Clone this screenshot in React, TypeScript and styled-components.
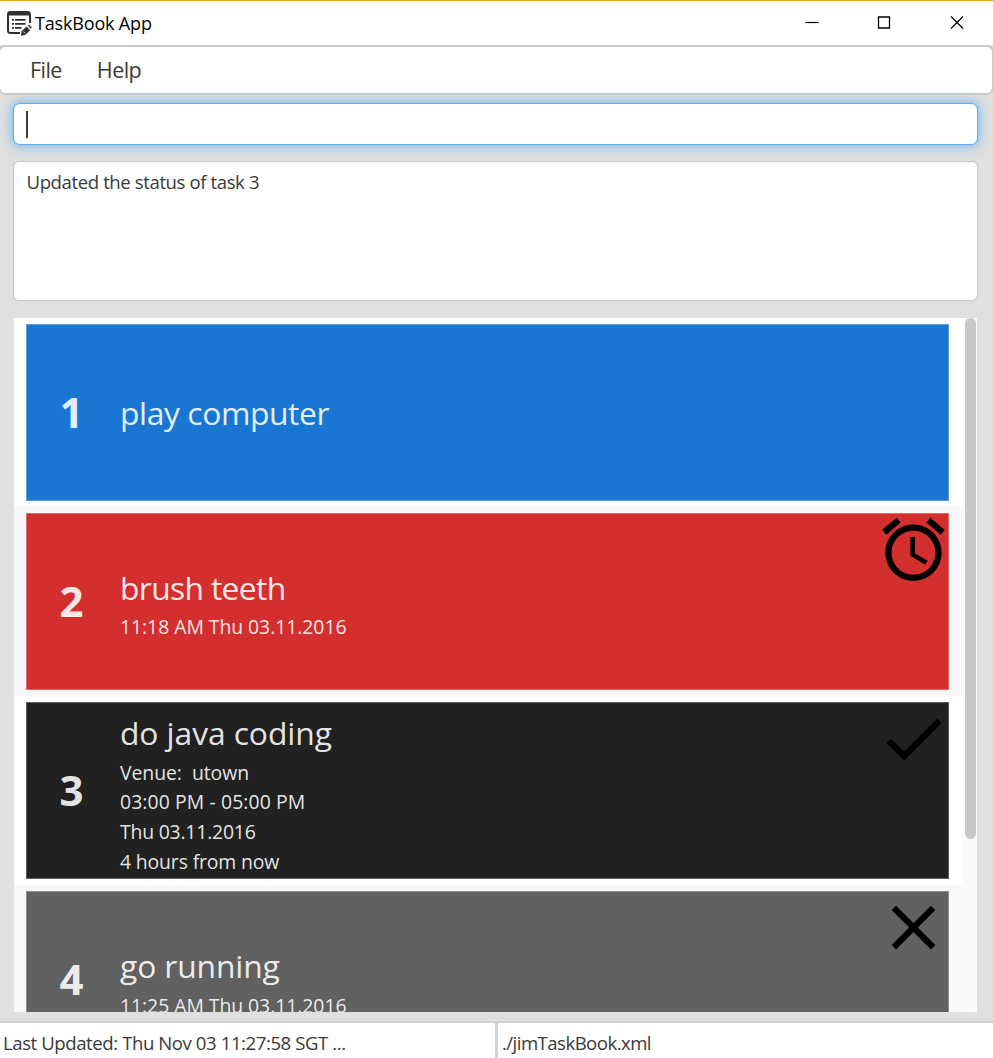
import React from "react";
import styled, { createGlobalStyle } from "styled-components";

const GlobalStyle = createGlobalStyle`
  * { box-sizing: border-box; }
  body {
    margin: 0;
    font-family: "Open Sans", "Noto Sans", sans-serif;
    color: #3a3a3a;
    background: #e0e0e0;
  }
`;

const Window = styled.div`
  display: flex;
  flex-direction: column;
  width: 994px;
  height: 1058px;
  overflow: hidden;
  background: #e0e0e0;
  border-top: 1px solid #f3a42f;
  border-right: 1px solid #d9d8cf;
`;

const TitleBar = styled.header`
  display: flex;
  align-items: center;
  flex: none;
  height: 44px;
  padding-left: 6px;
  background: #fff;
`;

const AppTitle = styled.h1`
  flex: 1;
  margin: 0 0 0 3px;
  font-size: 18px;
  font-weight: 400;
  line-height: 44px;
  letter-spacing: -0.17px;
  color: #000;
`;

const WindowButtons = styled.div`
  display: flex;
`;

const WindowButton = styled.div`
  display: flex;
  align-items: center;
  justify-content: center;
  width: 72.5px;
  height: 44px;
`;

const MenuBar = styled.nav`
  display: flex;
  align-items: center;
  flex: none;
  gap: 35px;
  height: 50px;
  margin: 0 -1px 0 -2px;
  padding-left: 30px;
  background: #fff;
  border: 2px solid #cbcbcb;
  border-radius: 7px;
`;

const MenuItem = styled.span`
  font-size: 21.5px;
  line-height: 46px;
  letter-spacing: -0.55px;
`;

const Body = styled.main`
  display: flex;
  flex-direction: column;
  flex: 1;
  min-height: 0;
  padding: 8px 15px 9px 13px;
`;

const CommandBox = styled.div`
  display: flex;
  align-items: center;
  flex: none;
  height: 42px;
  padding-left: 12px;
  background: #fff;
  border: 1.5px solid #62b0ea;
  border-radius: 7px;
  box-shadow: 0 0 0 1px rgba(150, 203, 243, 0.75), 0 0 12px 1px rgba(80, 166, 232, 0.72);
`;

const Caret = styled.span`
  width: 1.5px;
  height: 27px;
  background: #3c3c3c;
`;

const ResultDisplay = styled.div`
  flex: none;
  height: 140px;
  margin-top: 16px;
  padding: 6px 12.5px;
  background: #fff;
  border: 1px solid #c8c8c8;
  border-radius: 6px;
  box-shadow: 0 0 1px #c8c8c8;
  font-size: 18.6px;
  line-height: 28px;
  letter-spacing: -0.41px;
`;

const TaskPanel = styled.section`
  display: flex;
  flex: 1;
  min-height: 0;
  margin: 17px 1px 0 1px;
  overflow: hidden;
  background: #fafafa;
`;

const TaskList = styled.ul`
  flex: 1;
  margin: 0;
  padding: 0;
  list-style: none;
`;

const TaskRow = styled.li`
  height: 189px;
  padding: 6px 13px 6px 12px;
  background: #fff;

  &:nth-child(even) {
    background: #f8f8f8;
  }
`;

const TaskCard = styled.article<{ $color: string }>`
  position: relative;
  display: flex;
  align-items: center;
  height: 177px;
  background: ${({ $color }) => $color};
  border: 1px solid rgba(255, 255, 255, 0.28);
  color: rgba(255, 255, 255, 0.9);
`;

const TaskNumber = styled.span`
  width: 94px;
  padding-right: 5px;
  padding-bottom: 2px;
  text-align: center;
  font-size: 42px;
  font-weight: 700;
  line-height: 60px;
`;

const TaskInfo = styled.div<{ $shift: number }>`
  display: flex;
  flex-direction: column;
  padding-top: ${({ $shift }) => $shift}px;
  margin-left: -1px;
`;

const TaskName = styled.h2<{ $spacing: number }>`
  margin: -1px 0 1px;
  font-size: 31.8px;
  font-weight: 400;
  line-height: 46.7px;
  letter-spacing: ${({ $spacing }) => $spacing}px;
`;

const TaskDetail = styled.span<{ $spacing: number }>`
  font-size: 19.4px;
  font-weight: 400;
  line-height: 29.7px;
  letter-spacing: ${({ $spacing }) => $spacing}px;
  white-space: pre;
`;

const StatusIcon = styled.svg`
  position: absolute;
  top: -2px;
  right: -3px;
  width: 75px;
  height: 75px;
  fill: #000;
`;

const ScrollTrack = styled.div`
  flex: none;
  width: 15px;
  padding-left: 3px;
`;

const ScrollThumb = styled.div`
  width: 11px;
  height: 521px;
  border-radius: 6px;
  background: #c8c8c8;
`;

const StatusBar = styled.footer`
  display: grid;
  grid-template-columns: 495px 1fr;
  flex: none;
  gap: 3px;
  height: 37px;
  padding-top: 2px;
  background: #d2d2d2;
`;

const StatusCell = styled.div<{ $inset: number; $spacing: number }>`
  padding-left: ${({ $inset }) => $inset}px;
  background: #fff;
  font-size: 18.6px;
  line-height: 39px;
  letter-spacing: ${({ $spacing }) => $spacing}px;
  white-space: nowrap;
`;

const ICONS = {
  alarm:
    "M22 5.72l-4.6-3.86-1.29 1.53 4.6 3.86L22 5.72zM7.88 3.39L6.6 1.86 2 5.71l1.29 1.53 4.59-3.85zM12.5 8H11v6l4.75 2.85.75-1.23-4-2.37V8zM12 4c-4.97 0-9 4.03-9 9s4.02 9 9 9c4.97 0 9-4.03 9-9s-4.03-9-9-9zm0 16c-3.87 0-7-3.13-7-7s3.13-7 7-7 7 3.13 7 7-3.13 7-7 7z",
  done: "M9 16.2L4.8 12l-1.4 1.4L9 19 21 7l-1.4-1.4L9 16.2z",
  clear:
    "M19 6.41L17.59 5 12 10.59 6.41 5 5 6.41 10.59 12 5 17.59 6.41 19 12 13.41 17.59 19 19 17.59 13.41 12z",
};

interface Task {
  name: string;
  spacing: number;
  color: string;
  icon?: keyof typeof ICONS;
  shift: number;
  details: [string, number][];
}

const TASKS: Task[] = [
  { name: "play computer", spacing: -0.4, color: "#1976d3", shift: 3, details: [] },
  {
    name: "brush teeth",
    spacing: -0.66,
    color: "#d32f2f",
    icon: "alarm",
    shift: 4.5,
    details: [["11:18 AM Thu 03.11.2016", -0.05]],
  },
  {
    name: "do java coding",
    spacing: -0.08,
    color: "#212121",
    icon: "done",
    shift: 6.5,
    details: [
      ["Venue:  utown", -0.05],
      ["03:00 PM - 05:00 PM", 0.1],
      ["Thu 03.11.2016", -0.2],
      ["4 hours from now", -0.14],
    ],
  },
  {
    name: "go running",
    spacing: -0.12,
    color: "#616161",
    icon: "clear",
    shift: 5,
    details: [["11:25 AM Thu 03.11.2016", -0.05]],
  },
];

const AppIcon = () => (
  <svg width="26" height="26" viewBox="0 0 26 26" fill="none">
    <path
      d="M14 23H4.5A2.5 2.5 0 0 1 2 20.500V4.500A2.500 2.500 0 0 1 4.500 2h17A2.500 2.500 0 0 1 24 4.500V13"
      stroke="#303034"
      strokeWidth="2"
    />
    <path d="M2 5.500V4a2 2 0 0 1 2-2h18a2 2 0 0 1 2 2v1.500z" fill="#303034" />
    <path
      d="M6 9.800h2M6 13.800h2M6 17.800h2M9 9.800h10.500M9 13.800h10.500M9 17.800h6.500"
      stroke="#303034"
      strokeWidth="1.8"
    />
    <path d="M14.800 25.700l.8-4.400 5-4.700 3.600 3.600-5 4.700z" fill="#303034" />
    <path d="M21.700 15.600l1.200-1.200 3 3.100-1.200 1.200z" fill="#303034" />
    <path d="M17.300 21.500l2 2" stroke="#fff" strokeWidth="0.8" />
  </svg>
);

export default function App() {
  return (
    <>
      <GlobalStyle />
      <Window>
        <TitleBar>
          <AppIcon />
          <AppTitle>TaskBook App</AppTitle>
          <WindowButtons>
            <WindowButton>
              <svg width="14" height="14" viewBox="0 0 14 14" stroke="#000" strokeWidth="1.2">
                <path d="M.5 6.500h13" />
              </svg>
            </WindowButton>
            <WindowButton>
              <svg width="14" height="14" viewBox="0 0 14 14" stroke="#000" strokeWidth="1.3" fill="none">
                <path d="M1.500 1h11v11h-11z" />
              </svg>
            </WindowButton>
            <WindowButton>
              <svg width="14" height="14" viewBox="0 0 14 14" stroke="#000" strokeWidth="1.2">
                <path d="M1 .5l12 12M13 .5L1 12.500" />
              </svg>
            </WindowButton>
          </WindowButtons>
        </TitleBar>
        <MenuBar>
          <MenuItem>File</MenuItem>
          <MenuItem>Help</MenuItem>
        </MenuBar>
        <Body>
          <CommandBox>
            <Caret />
          </CommandBox>
          <ResultDisplay>Updated the status of task 3</ResultDisplay>
          <TaskPanel>
            <TaskList>
              {TASKS.map((task, index) => (
                <TaskRow key={task.name}>
                  <TaskCard $color={task.color}>
                    <TaskNumber>{index + 1}</TaskNumber>
                    <TaskInfo $shift={task.shift}>
                      <TaskName $spacing={task.spacing}>{task.name}</TaskName>
                      {task.details.map(([text, spacing]) => (
                        <TaskDetail key={text} $spacing={spacing}>
                          {text}
                        </TaskDetail>
                      ))}
                    </TaskInfo>
                    {task.icon && (
                      <StatusIcon viewBox="0 0 24 24">
                        <path d={ICONS[task.icon]} />
                      </StatusIcon>
                    )}
                  </TaskCard>
                </TaskRow>
              ))}
            </TaskList>
            <ScrollTrack>
              <ScrollThumb />
            </ScrollTrack>
          </TaskPanel>
        </Body>
        <StatusBar>
          <StatusCell $inset={3} $spacing={-0.43}>
            Last Updated: Thu Nov 03 11:27:58 SGT ...
          </StatusCell>
          <StatusCell $inset={4} $spacing={-0.54}>
            ./jimTaskBook.xml
          </StatusCell>
        </StatusBar>
      </Window>
    </>
  );
}
